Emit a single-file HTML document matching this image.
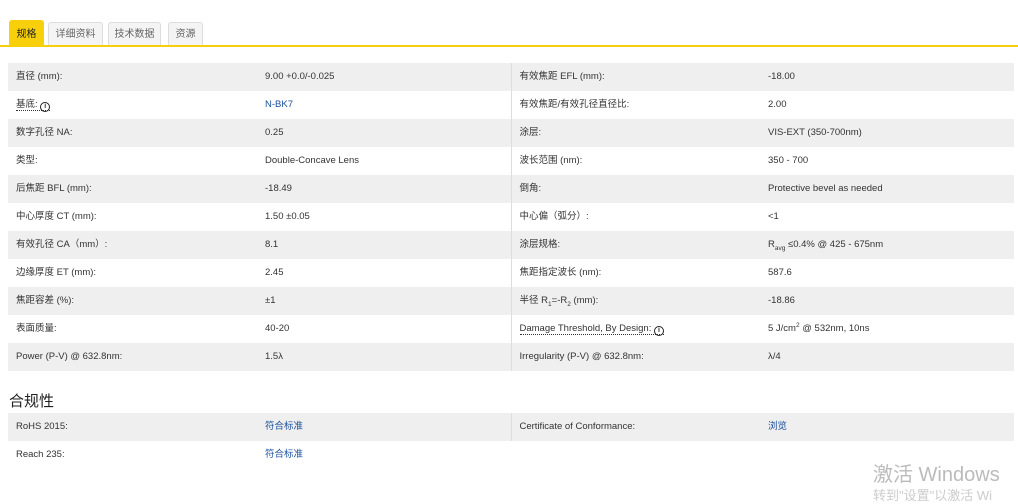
<!DOCTYPE html>
<html><head><meta charset="utf-8"><style>
body{margin:0;width:1018px;height:498px;background:#fff;font-family:"Liberation Sans","Noto Sans CJK SC",sans-serif;color:#333;overflow:hidden;position:relative}
.tabs{position:absolute;left:9px;top:20px;height:26px}
.tab{position:absolute;top:2px;height:23px;border:1px solid #ddd;border-bottom:none;background:#f4f4f4;border-radius:3px 3px 0 0;font-size:10px;color:#666;line-height:24px;text-align:center}
.tab.a{background:#f7cf0a;border-color:#f7cf0a;color:#222;top:0;height:26px;line-height:28px}
.line{position:absolute;left:0;top:45px;width:1018px;height:2px;background:#f7cf0a}
table{position:absolute;left:8px;border-collapse:collapse;width:1006px;font-size:9.5px;table-layout:fixed}
td{height:28px;padding:0;vertical-align:middle;line-height:12px}
tr.g td{background:#efefef}
.c1{padding-left:8px}.c2{border-right:1px solid #ddd}.c3{padding-left:8px}
a{color:#1a4f9c;text-decoration:none}
.u{border-bottom:1px dotted #333}
.i{display:inline-block;width:8px;height:8px;border:1.3px solid #222;border-radius:50%;font-size:7px;line-height:8px;text-align:center;font-weight:bold;vertical-align:-1px}
sub,sup{font-size:6.5px;line-height:0}
h3{position:absolute;left:9px;top:390px;margin:0;font-size:15px;font-weight:normal;color:#222}
.wm{position:absolute;left:873px;top:458px;font-size:20px;color:#bbb}
.wm2{position:absolute;left:873px;top:485px;font-size:13px;color:#ccc}
</style></head><body>
<div class="tabs">
<div class="tab a" style="left:0;width:33px">规格</div>
<div class="tab" style="left:39px;width:53px">详细资料</div>
<div class="tab" style="left:99px;width:51px">技术数据</div>
<div class="tab" style="left:159px;width:33px">资源</div>
</div>
<div class="line"></div>
<table style="top:63px">
<colgroup><col style="width:257px"><col style="width:246px"><col style="width:257px"><col></colgroup>
<tr class="g"><td class="c1">直径 (mm):</td><td class="c2">9.00 +0.0/-0.025</td><td class="c3">有效焦距 EFL (mm):</td><td>-18.00</td></tr>
<tr><td class="c1"><span class="u">基底: <span class="i">i</span></span></td><td class="c2"><a>N-BK7</a></td><td class="c3">有效焦距/有效孔径直径比:</td><td>2.00</td></tr>
<tr class="g"><td class="c1">数字孔径 NA:</td><td class="c2">0.25</td><td class="c3">涂层:</td><td>VIS-EXT (350-700nm)</td></tr>
<tr><td class="c1">类型:</td><td class="c2">Double-Concave Lens</td><td class="c3">波长范围 (nm):</td><td>350 - 700</td></tr>
<tr class="g"><td class="c1">后焦距 BFL (mm):</td><td class="c2">-18.49</td><td class="c3">倒角:</td><td>Protective bevel as needed</td></tr>
<tr><td class="c1">中心厚度 CT (mm):</td><td class="c2">1.50 ±0.05</td><td class="c3">中心偏（弧分）:</td><td>&lt;1</td></tr>
<tr class="g"><td class="c1">有效孔径 CA（mm）:</td><td class="c2">8.1</td><td class="c3">涂层规格:</td><td>R<sub>avg</sub> ≤0.4% @ 425 - 675nm</td></tr>
<tr><td class="c1">边缘厚度 ET (mm):</td><td class="c2">2.45</td><td class="c3">焦距指定波长 (nm):</td><td>587.6</td></tr>
<tr class="g"><td class="c1">焦距容差 (%):</td><td class="c2">±1</td><td class="c3">半径 R<sub>1</sub>=-R<sub>2</sub> (mm):</td><td>-18.86</td></tr>
<tr><td class="c1">表面质量:</td><td class="c2">40-20</td><td class="c3"><span class="u">Damage Threshold, By Design: <span class="i">i</span></span></td><td>5 J/cm<sup>2</sup> @ 532nm, 10ns</td></tr>
<tr class="g"><td class="c1">Power (P-V) @ 632.8nm:</td><td class="c2">1.5λ</td><td class="c3">Irregularity (P-V) @ 632.8nm:</td><td>λ/4</td></tr>
</table>
<h3>合规性</h3>
<table style="top:413px">
<colgroup><col style="width:257px"><col style="width:246px"><col style="width:257px"><col></colgroup>
<tr class="g"><td class="c1">RoHS 2015:</td><td class="c2"><a>符合标准</a></td><td class="c3">Certificate of Conformance:</td><td><a>浏览</a></td></tr>
<tr><td class="c1">Reach 235:</td><td class="c2" style="border-right:none"><a>符合标准</a></td><td class="c3"></td><td></td></tr>
</table>
<div class="wm">激活 Windows</div>
<div class="wm2">转到"设置"以激活 Wi</div>
</body></html>
